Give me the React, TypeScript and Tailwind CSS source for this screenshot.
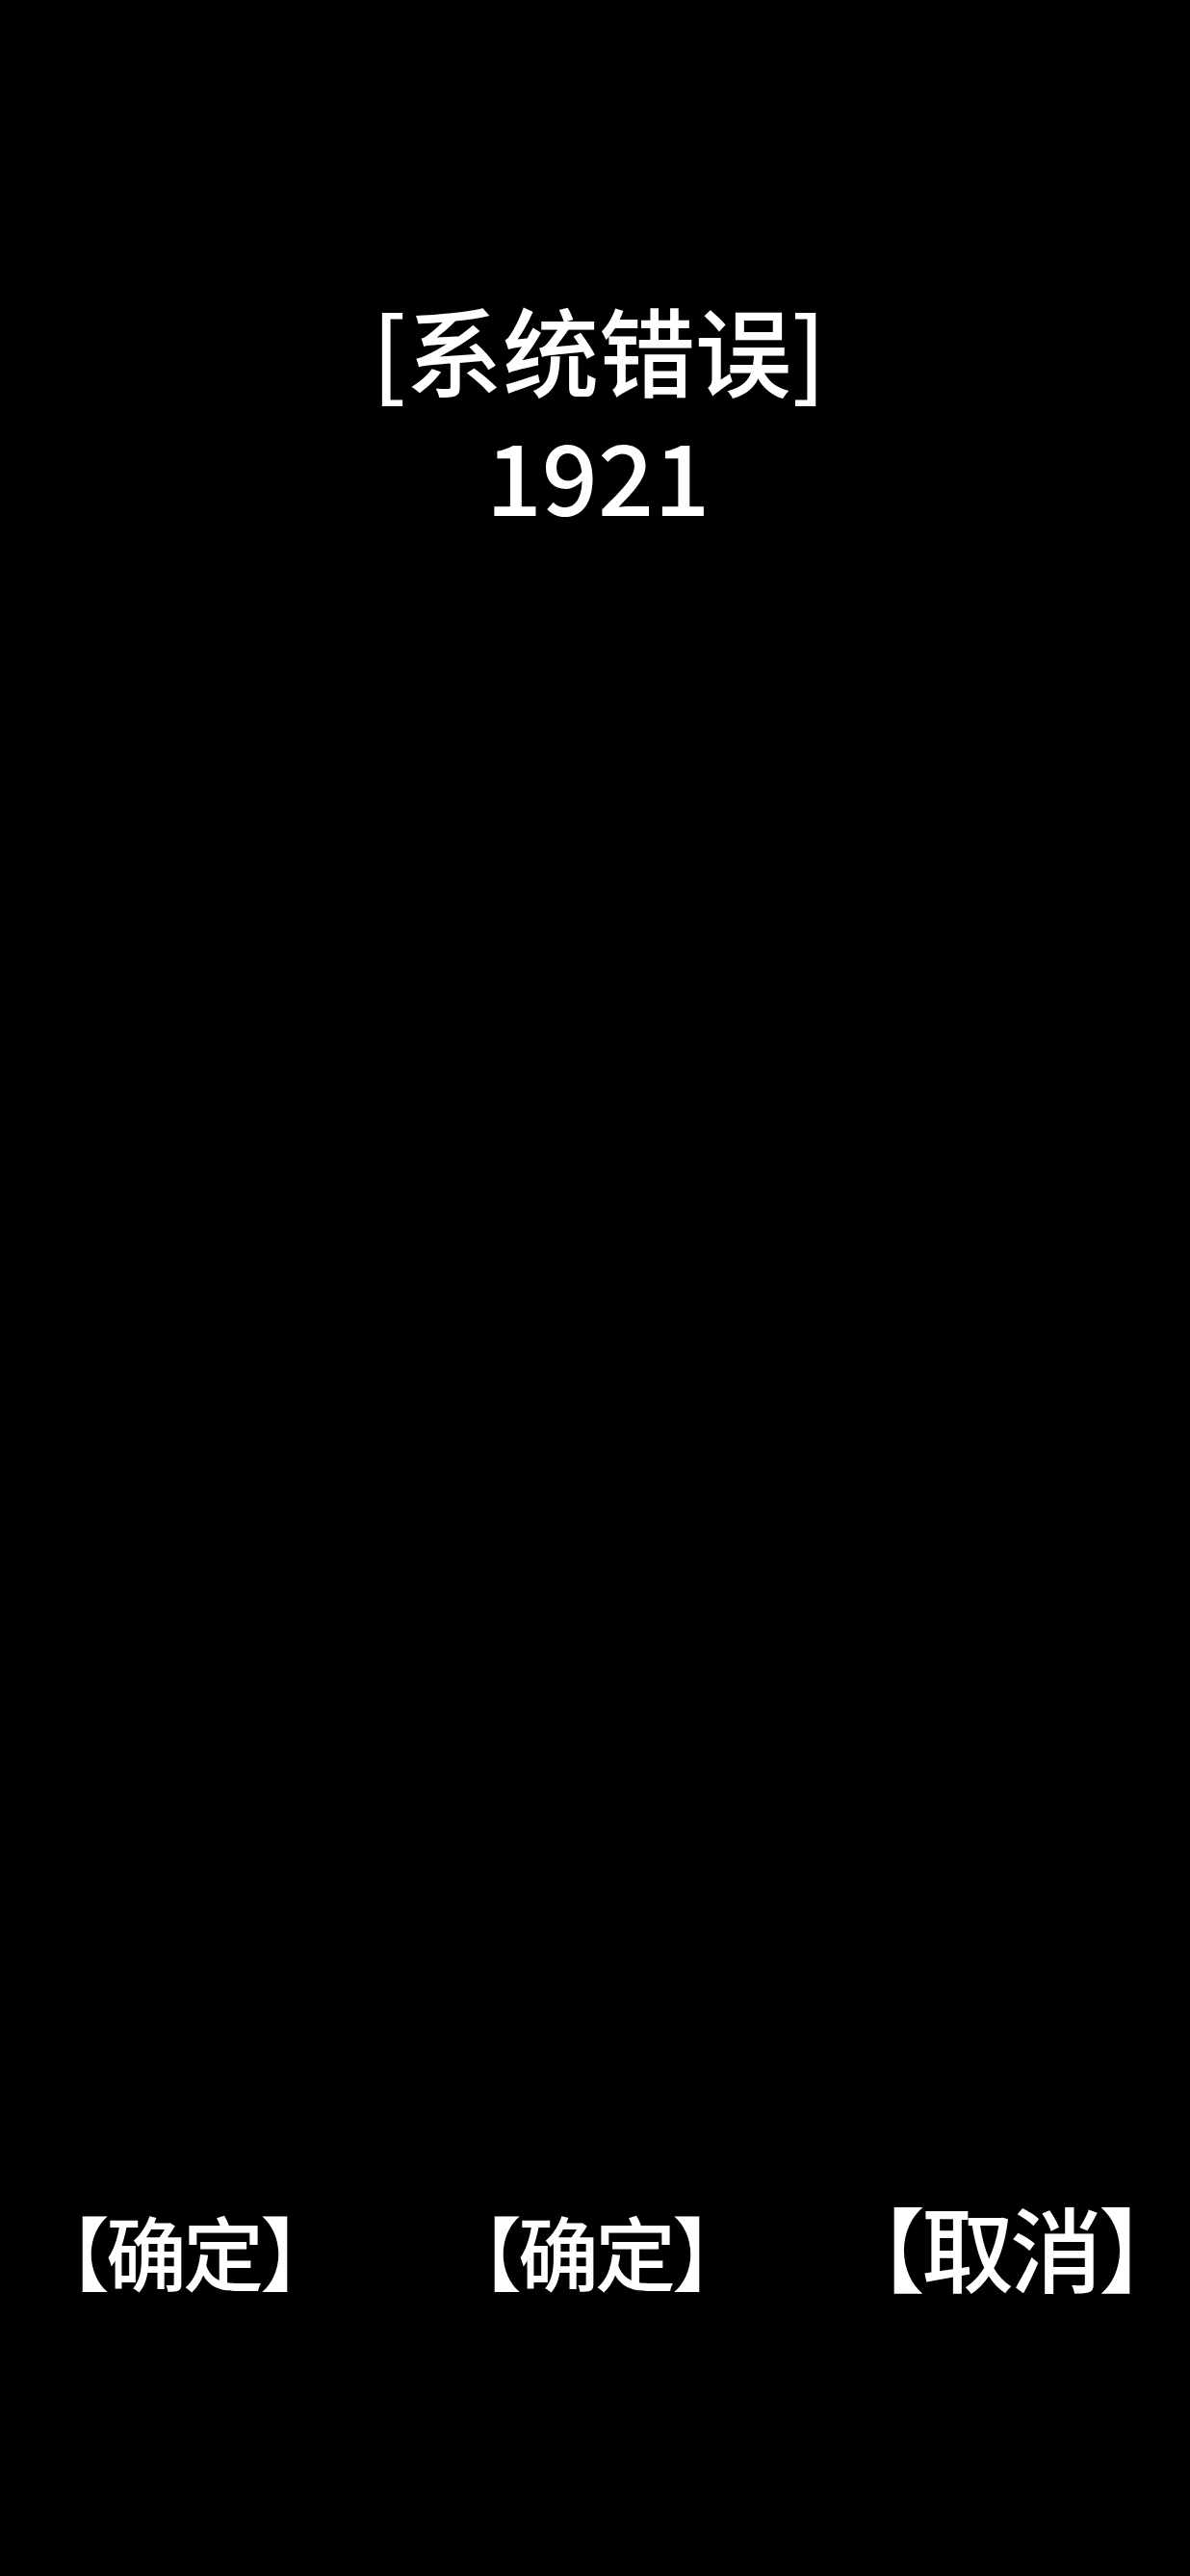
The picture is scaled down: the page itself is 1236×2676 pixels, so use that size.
import React from "react";

const font = { fontFamily: '"Noto Sans CJK SC", "Noto Sans", sans-serif' };

export default function App() {
  return (
    <div
      className="w-full min-h-[2676px] bg-black text-white flex flex-col"
      style={font}
    >
      <div className="pt-[298px] flex flex-col items-center font-medium">
        <div className="text-[100px] leading-[128px] tracking-[0px] pl-[8px]">[系统错误]</div>
        <div className="text-[102px] leading-[124px] tracking-[0px] pt-[4px] pl-[6px]">1921</div>
      </div>
      <div className="mt-[1724px] flex items-end pl-[30px] font-medium">
        <div className="text-[84px] leading-[100px] tracking-[-4px] w-[428px]">【确定】</div>
        <div className="text-[84px] leading-[100px] tracking-[-4px] w-[407px]">【确定】</div>
        <div className="text-[96px] leading-[110px] tracking-[-4px]">【取消】</div>
      </div>
    </div>
  );
}
